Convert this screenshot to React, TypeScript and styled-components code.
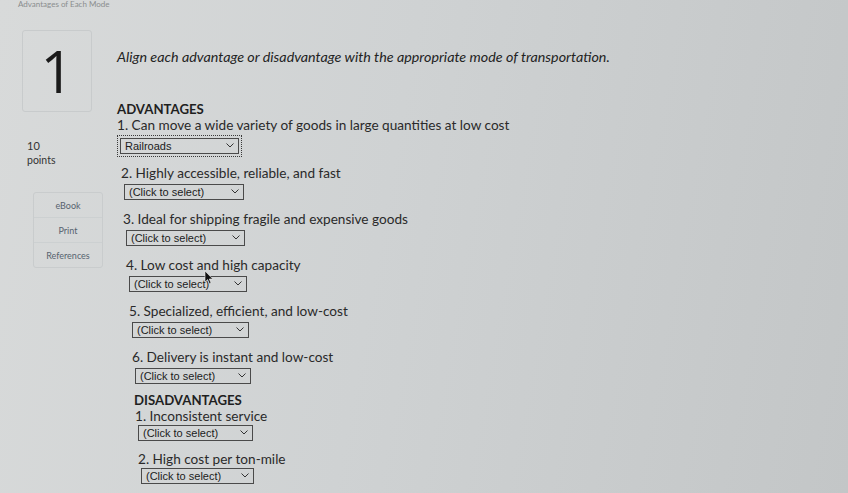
import React from 'react';
import styled, { createGlobalStyle } from 'styled-components';

const GlobalStyle = createGlobalStyle`
  html, body {
    margin: 0;
    padding: 0;
  }
  body {
    width: 848px;
    height: 493px;
    overflow: hidden;
    background: linear-gradient(100deg, #d8dada 0%, #cfd2d3 45%, #c3c6c7 100%);
    font-family: Lato, "Open Sans", sans-serif;
    color: #262626;
  }
`;

interface IndentProps {
  indent: number;
}

interface TitleProps extends IndentProps {
  pull?: number;
}

interface ItemProps extends IndentProps {
  compact?: boolean;
}

interface SelectProps {
  focused?: boolean;
  compact?: boolean;
  width: number;
}

const Page = styled.div`
  position: relative;
  padding-left: 18px;
`;

const TopTitle = styled.div`
  height: 8px;
  font-size: 8px;
  line-height: 8px;
  color: #8a8d8e;
`;

const Layout = styled.div`
  display: grid;
  grid-template-columns: 99px 1fr;
`;

const Sidebar = styled.aside`
  display: flex;
  flex-direction: column;
  padding-top: 22px;
  padding-left: 4px;
`;

const NumberBox = styled.div`
  width: 68px;
  height: 80px;
  border: 1px solid #c8cbcc;
  border-radius: 3px;
  display: flex;
  align-items: center;
  justify-content: center;
  font-family: "Open Sans", sans-serif;
  font-size: 58px;
  font-weight: 500;
  line-height: 1;
  color: #1a1a1a;
`;

const Points = styled.div`
  margin-top: 26px;
  padding-left: 5px;
  font-size: 11px;
  line-height: 15px;
  color: #333;
`;

const PointsUnit = styled.div`
  font-size: 10.5px;
`;

const ToolPanel = styled.nav`
  margin-top: 24px;
  margin-left: 11px;
  width: 68px;
  border: 1px solid #c9cccd;
  border-radius: 3px;
  display: flex;
  flex-direction: column;
`;

const ToolItem = styled.div`
  height: 24px;
  display: flex;
  align-items: center;
  justify-content: center;
  font-size: 9px;
  color: #56636f;
  & + & {
    border-top: 1px solid #ccd0d1;
  }
`;

const Content = styled.main`
  padding-top: 41px;
`;

const Instruction = styled.p`
  margin: 0 0 36px 0;
  font-size: 14.3px;
  font-style: italic;
  line-height: 16px;
  color: #232323;
`;

const SectionTitle = styled.h3<TitleProps>`
  margin: ${(p) => -(p.pull ?? 0)}px 0 0 ${(p) => p.indent}px;
  font-size: 13.2px;
  font-weight: 700;
  line-height: 16px;
  color: #1f1f1f;
`;

const Item = styled.div<ItemProps>`
  margin-left: ${(p) => p.indent}px;
  margin-bottom: ${(p) => (p.compact ? 10 : 11.5)}px;
`;

const Label = styled.div`
  font-size: 13.6px;
  line-height: 17px;
  color: #2a2a2a;
`;

const SelectWrap = styled.div<SelectProps>`
  position: relative;
  width: ${(p) => p.width}px;
  margin-top: ${(p) => (p.focused ? 3.5 : p.compact ? 0 : 1.5)}px;
  margin-left: 3px;
  outline: ${(p) => (p.focused ? '1px dotted #3a3a3a' : 'none')};
  outline-offset: 2px;
`;

const Select = styled.select`
  appearance: none;
  display: block;
  width: 100%;
  height: 16px;
  margin: 0;
  padding: 0 16px 0 4px;
  border: 1px solid #4a4a4a;
  border-radius: 0;
  background: transparent;
  font-family: "Liberation Sans", Arial, sans-serif;
  font-size: 11px;
  line-height: 14px;
  color: #1c1c1c;
`;

const Chevron = styled.svg`
  position: absolute;
  right: 5px;
  top: 5px;
  width: 8px;
  height: 5px;
  pointer-events: none;
`;

const Cursor = styled.svg`
  position: absolute;
  left: 204px;
  top: 270px;
  width: 10px;
  height: 15px;
`;

interface Question {
  text: string;
  value: string;
  indent: number;
  width: number;
  focused?: boolean;
  compact?: boolean;
}

const advantages: Question[] = [
  { text: '1. Can move a wide variety of goods in large quantities at low cost', value: 'Railroads', indent: 0, width: 119, focused: true },
  { text: '2. Highly accessible, reliable, and fast', value: '(Click to select)', indent: 4, width: 120 },
  { text: '3. Ideal for shipping fragile and expensive goods', value: '(Click to select)', indent: 6, width: 119 },
  { text: '4. Low cost and high capacity', value: '(Click to select)', indent: 9, width: 118 },
  { text: '5. Specialized, efficient, and low-cost', value: '(Click to select)', indent: 12, width: 117 },
  { text: '6. Delivery is instant and low-cost', value: '(Click to select)', indent: 15, width: 116 },
];

const disadvantages: Question[] = [
  { text: '1. Inconsistent service', value: '(Click to select)', indent: 18, width: 115, compact: true },
  { text: '2. High cost per ton-mile', value: '(Click to select)', indent: 21, width: 113, compact: true },
];

const modes = ['(Click to select)', 'Railroads', 'Trucks', 'Pipelines', 'Water carriers', 'Airways', 'Internet'];

function QuestionRow({ q }: { q: Question }) {
  return (
    <Item indent={q.indent} compact={q.compact}>
      <Label>{q.text}</Label>
      <SelectWrap focused={q.focused} compact={q.compact} width={q.width}>
        <Select defaultValue={q.value}>
          {modes.map((m) => (
            <option key={m} value={m}>
              {m}
            </option>
          ))}
        </Select>
        <Chevron viewBox="0 0 8 5">
          <path d="M0.5 0.5 L4 4 L7.5 0.5" fill="none" stroke="#333" strokeWidth="1" />
        </Chevron>
      </SelectWrap>
    </Item>
  );
}

export default function App() {
  return (
    <>
      <GlobalStyle />
      <Page>
        <TopTitle>Advantages of Each Mode</TopTitle>
        <Layout>
          <Sidebar>
            <NumberBox>1</NumberBox>
            <Points>
              10
              <PointsUnit>points</PointsUnit>
            </Points>
            <ToolPanel>
              <ToolItem>eBook</ToolItem>
              <ToolItem>Print</ToolItem>
              <ToolItem>References</ToolItem>
            </ToolPanel>
          </Sidebar>
          <Content>
            <Instruction>
              Align each advantage or disadvantage with the appropriate mode of transportation.
            </Instruction>
            <SectionTitle indent={0}>ADVANTAGES</SectionTitle>
            {advantages.map((q) => (
              <QuestionRow key={q.text} q={q} />
            ))}
            <SectionTitle indent={17} pull={3}>
              DISADVANTAGES
            </SectionTitle>
            {disadvantages.map((q) => (
              <QuestionRow key={q.text} q={q} />
            ))}
          </Content>
        </Layout>
        <Cursor viewBox="0 0 10 15">
          <path d="M1 1 L1 12 L3.6 9.6 L5.4 13.8 L7 13.1 L5.3 9 L8.8 9 Z" fill="#111" stroke="#eee" strokeWidth="0.6" />
        </Cursor>
      </Page>
    </>
  );
}
